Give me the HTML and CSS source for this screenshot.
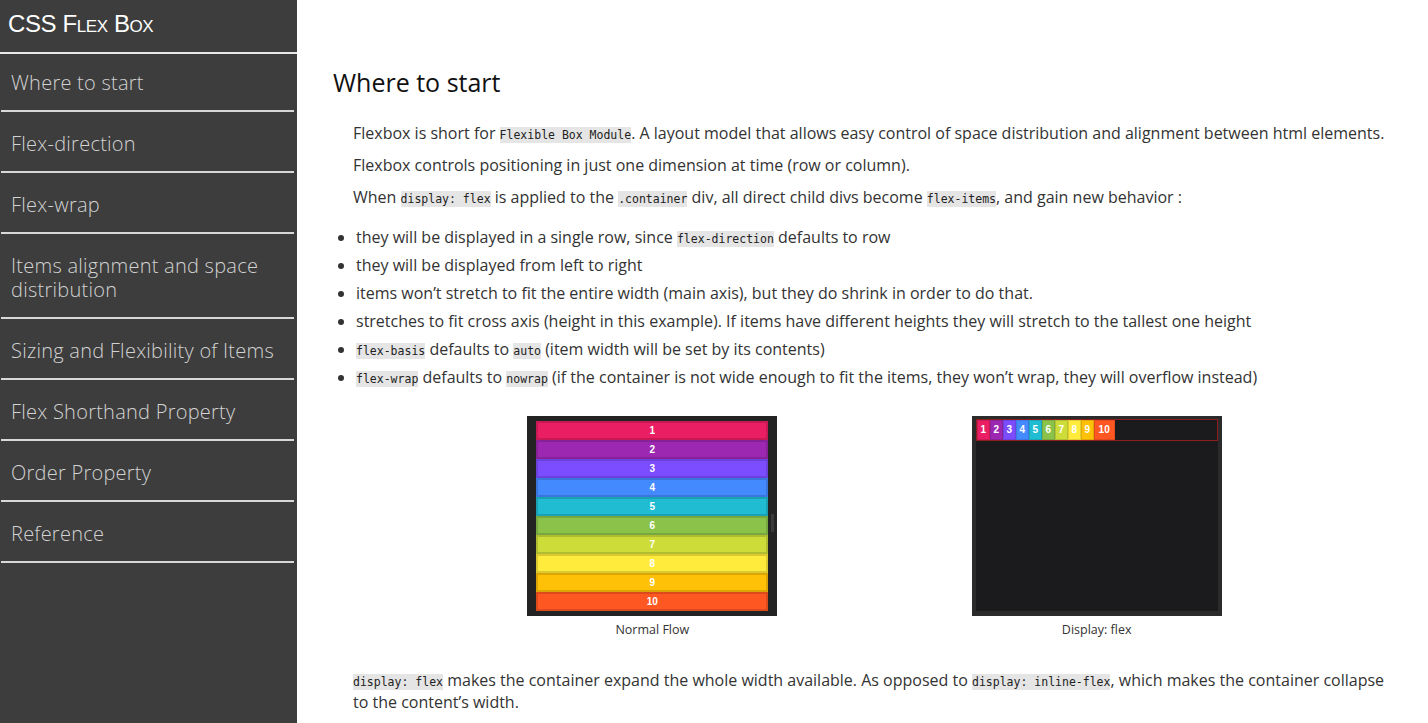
FILE: index.html
```html
<!DOCTYPE html>
<html lang="en">
<head>
<meta charset="utf-8">
<title>CSS Flex Box</title>
<link rel="stylesheet" href="styles.css">
</head>
<body>
<div class="page">
  <aside class="sidebar">
    <div class="brand">CSS Flex Box</div>
    <ul class="nav">
      <li>Where to start</li>
      <li>Flex-direction</li>
      <li>Flex-wrap</li>
      <li>Items alignment and space distribution</li>
      <li>Sizing and Flexibility of Items</li>
      <li>Flex Shorthand Property</li>
      <li>Order Property</li>
      <li>Reference</li>
    </ul>
  </aside>
  <main class="content">
    <h1 class="title">Where to start</h1>
    <p class="para">Flexbox is short for <code>Flexible Box Module</code>. A layout model that allows easy control of space distribution and alignment between html elements.</p>
    <p class="para">Flexbox controls positioning in just one dimension at time (row or column).</p>
    <p class="para">When <code>display: flex</code> is applied to the <code>.container</code> div, all direct child divs become <code>flex-items</code>, and gain new behavior :</p>
    <ul class="bullets">
      <li>they will be displayed in a single row, since <code>flex-direction</code> defaults to row</li>
      <li>they will be displayed from left to right</li>
      <li>items won’t stretch to fit the entire width (main axis), but they do shrink in order to do that.</li>
      <li>stretches to fit cross axis (height in this example). If items have different heights they will stretch to the tallest one height</li>
      <li><code>flex-basis</code> defaults to <code>auto</code> (item width will be set by its contents)</li>
      <li><code>flex-wrap</code> defaults to <code>nowrap</code> (if the container is not wide enough to fit the items, they won’t wrap, they will overflow instead)</li>
    </ul>
    <div class="figures">
      <figure class="fig">
        <div class="demo demo-block">
          <div class="bar c1">1</div>
          <div class="bar c2">2</div>
          <div class="bar c3">3</div>
          <div class="bar c4">4</div>
          <div class="bar c5">5</div>
          <div class="bar c6">6</div>
          <div class="bar c7">7</div>
          <div class="bar c8">8</div>
          <div class="bar c9">9</div>
          <div class="bar c10">10</div>
          <div class="scroll"></div>
        </div>
        <figcaption class="cap">Normal Flow</figcaption>
      </figure>
      <figure class="fig">
        <div class="demo demo-flex">
          <div class="flexrow">
            <div class="chip c1">1</div>
            <div class="chip c2">2</div>
            <div class="chip c3">3</div>
            <div class="chip c4">4</div>
            <div class="chip c5">5</div>
            <div class="chip c6">6</div>
            <div class="chip c7">7</div>
            <div class="chip c8">8</div>
            <div class="chip c9">9</div>
            <div class="chip c10 wide">10</div>
          </div>
        </div>
        <figcaption class="cap">Display: flex</figcaption>
      </figure>
    </div>
    <p class="para last"><code>display: flex</code> makes the container expand the whole width available. As opposed to <code>display: inline-flex</code>, which makes the container collapse to the content’s width.</p>
  </main>
</div>
</body>
</html>
```

FILE: styles.css
```css
html, body {
  margin: 0;
  padding: 0;
  height: 100%;
  overflow: hidden;
  background: #ffffff;
}

.page {
  display: flex;
  height: 723px;
}

.sidebar {
  width: 297px;
  flex: 0 0 297px;
  background: #3d3d3d;
  height: 100%;
}

.brand {
  box-sizing: content-box;
  height: 43px;
  padding: 9px 0 0 8px;
  font-family: "Liberation Sans", Arial, sans-serif;
  font-variant: small-caps;
  font-size: 24px;
  line-height: 30px;
  color: #ffffff;
  border-bottom: 2px solid #e8e8e8;
  letter-spacing: -0.4px;
}

.nav {
  list-style: none;
  margin: 0 3px 0 1px;
  padding: 0;
}

.nav li {
  padding: 20px 10px 15px;
  font-family: "Open Sans", "Lato", sans-serif;
  font-weight: 300;
  font-size: 20px;
  line-height: 24px;
  letter-spacing: 0.25px;
  color: #d2d2d2;
  border-bottom: 2px solid #d8d8d8;
}

.nav li:first-child {
  padding-top: 17px;
}

.content {
  flex: 1;
  padding: 0 12px 0 36px;
  font-family: "Open Sans", "Liberation Sans", sans-serif;
  color: #333333;
}

.title {
  margin: 64px 0 21px;
  font-size: 25px;
  font-weight: 400;
  line-height: 36px;
  color: #111111;
}

.para {
  margin: 0 20px 8px;
  font-size: 16px;
  line-height: 24px;
}

code {
  font-family: "DejaVu Sans Mono", "Liberation Mono", monospace;
  font-size: 11.5px;
  line-height: 1;
  background: #e5e5e5;
  padding: 1px 0;
  color: #222222;
}

.bullets {
  margin: 14px 0 0;
  padding-left: 23px;
  font-size: 16px;
  line-height: 28px;
}

.figures {
  display: flex;
  justify-content: space-evenly;
  margin-top: 25px;
}

.fig {
  margin: 0;
  width: 250px;
}

.demo {
  width: 250px;
  height: 200px;
  box-sizing: border-box;
  position: relative;
}

.demo-block {
  background: #232323;
  padding: 5px 9px;
}

.bar {
  height: 19px;
  box-sizing: border-box;
  border: 2px solid rgba(0, 0, 0, 0.14);
  color: #ffffff;
  font-family: "Liberation Sans", Arial, sans-serif;
  font-weight: 700;
  font-size: 10px;
  line-height: 15px;
  text-align: center;
}

.scroll {
  position: absolute;
  right: 3px;
  top: 98px;
  width: 3px;
  height: 18px;
  background: #3a3a3a;
}

.demo-flex {
  background: #2b2b2b;
  padding: 3px 4px 5px;
}

.demo-flex::before {
  content: "";
  position: absolute;
  left: 4px;
  right: 4px;
  top: 3px;
  bottom: 5px;
  background: #1b1b1d;
}

.flexrow {
  position: relative;
  display: flex;
  height: 22px;
  box-sizing: border-box;
  border: 1px solid #8e1c1c;
}

.chip {
  width: 13px;
  height: 20px;
  box-sizing: border-box;
  border: 1px solid rgba(0, 0, 0, 0.12);
  color: #ffffff;
  font-family: "Liberation Sans", Arial, sans-serif;
  font-weight: 700;
  font-size: 10px;
  line-height: 18px;
  text-align: center;
}

.chip.wide {
  width: 21px;
}

.c1 { background: #e91e63; }
.c2 { background: #9c27b0; }
.c3 { background: #7c4dff; }
.c4 { background: #448aff; }
.c5 { background: #1fbcd2; }
.c6 { background: #8bc34a; }
.c7 { background: #cddc39; }
.c8 { background: #ffeb3b; }
.c9 { background: #ffc107; }
.c10 { background: #ff5722; }

.cap {
  margin-top: 4px;
  text-align: center;
  font-size: 12.5px;
  line-height: 20px;
  color: #333333;
}

.para.last {
  margin-top: 29px;
  line-height: 22px;
}
```
